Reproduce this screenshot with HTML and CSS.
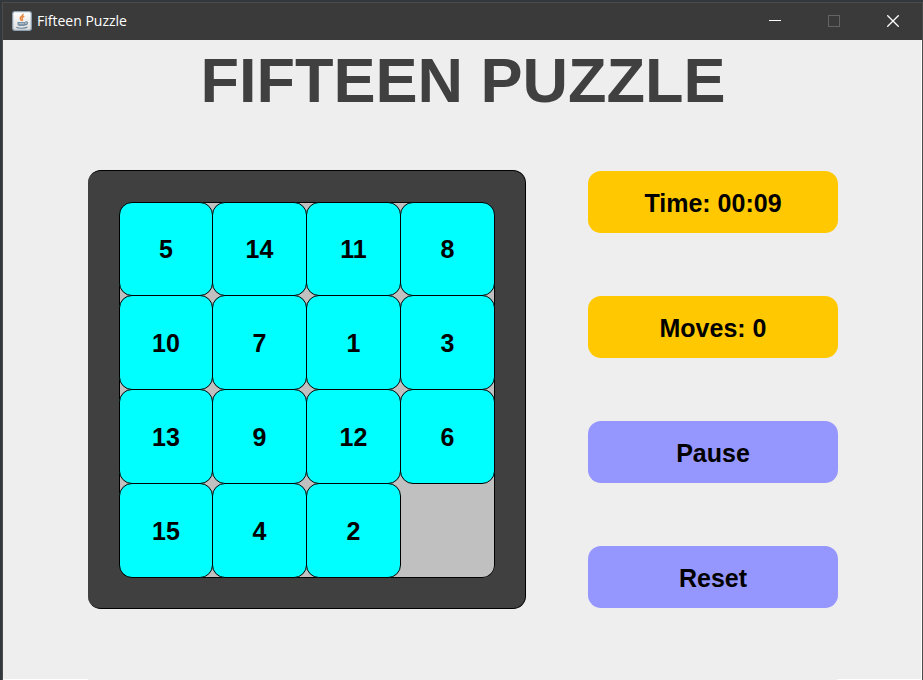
FILE: index.html
```html
<!DOCTYPE html>
<html lang="en">
<head>
<meta charset="utf-8">
<title>Fifteen Puzzle</title>
<link rel="stylesheet" href="styles.css">
</head>
<body>
<div class="window">
  <header class="titlebar">
    <svg class="app-icon" viewBox="0 0 20 20" aria-hidden="true">
      <defs><linearGradient id="plate" x1="0" y1="0" x2="0" y2="1"><stop offset="0" stop-color="#fff"/><stop offset="1" stop-color="#dcdcde"/></linearGradient></defs>
      <rect x=".7" y=".7" width="18.6" height="18.6" rx="2" fill="url(#plate)" stroke="#8fa3b3" stroke-width="1.2"/>
      <path d="M11 2.800c.8 2.200-3.400 2.800-2.800 4.800.3.900 1.100 1.300 1.200 2.300M12.300 5.400c-2 .8-2.800 1.500-2 2.600.5.800.2 1.300-.2 1.800" fill="none" stroke="#e88335" stroke-width="1.400"/>
      <path d="M5.500 11h8v2.200c0 1.200-1 1.800-2.200 1.800H8c-1.400 0-2.200-.8-2.500-1.800z" fill="#7890a3"/>
      <path d="M13.300 11c3-.9 2.800 2.300-.3 2.800M4.300 16.300c2.700 1.300 8.500 1.300 11.200-.2" fill="none" stroke="#68849a" stroke-width="1.200"/>
      <path d="M7 12.700h5" stroke="#c9d3da" stroke-width=".8"/>
    </svg>
    <span class="caption">Fifteen Puzzle</span>
    <div class="controls">
      <button class="control" type="button" aria-label="Minimize">
        <svg viewBox="0 0 12 12"><path d="M0 5.500h12" stroke="#fff"/></svg>
      </button>
      <button class="control" type="button" aria-label="Maximize" disabled>
        <svg viewBox="0 0 12 12"><rect x=".5" y=".5" width="11" height="11" fill="none" stroke="#646464"/></svg>
      </button>
      <button class="control" type="button" aria-label="Close">
        <svg viewBox="0 0 12 12"><path d="M.3.3l11.400 11.400M11.700.3L.3 11.700" stroke="#fff" stroke-width="1.300"/></svg>
      </button>
    </div>
  </header>
  <main class="content">
    <h1 class="title">FIFTEEN PUZZLE</h1>
    <div class="game">
      <div class="frame">
        <div class="board">
          <button class="tile" type="button">5</button>
          <button class="tile" type="button">14</button>
          <button class="tile" type="button">11</button>
          <button class="tile" type="button">8</button>
          <button class="tile" type="button">10</button>
          <button class="tile" type="button">7</button>
          <button class="tile" type="button">1</button>
          <button class="tile" type="button">3</button>
          <button class="tile" type="button">13</button>
          <button class="tile" type="button">9</button>
          <button class="tile" type="button">12</button>
          <button class="tile" type="button">6</button>
          <button class="tile" type="button">15</button>
          <button class="tile" type="button">4</button>
          <button class="tile" type="button">2</button>
        </div>
      </div>
      <div class="side">
        <div class="panel">Time: 00:09</div>
        <div class="panel">Moves: 0</div>
        <button class="panel action" type="button">Pause</button>
        <button class="panel action" type="button">Reset</button>
      </div>
    </div>
    <div class="edge"></div>
  </main>
</div>
</body>
</html>
```
FILE: styles.css
```css
* {
  box-sizing: border-box;
}

body {
  margin: 0;
  padding: 2px 0 0 2px;
  min-height: 100vh;
  display: flex;
  background: #33383c;
  font-family: "Liberation Sans", Arial, sans-serif;
}

button {
  font: inherit;
  color: inherit;
  border: 0;
  padding: 0;
}

.window {
  flex: 1;
  display: flex;
  flex-direction: column;
  border: 1px solid #4b4b4b;
  border-bottom: 0;
}

.titlebar {
  height: 37px;
  display: flex;
  align-items: center;
  padding: 0 0 2px 9px;
  background: #3a3a3a;
  color: #fff;
}

.app-icon {
  width: 20px;
  height: 20px;
}

.caption {
  margin-left: 5px;
  font-family: "Open Sans", "Noto Sans", sans-serif;
  font-size: 14px;
  line-height: 20px;
}

.controls {
  display: flex;
  align-self: stretch;
  margin-left: auto;
}

.control {
  width: 59px;
  display: flex;
  align-items: center;
  justify-content: center;
  background: none;
}

.control svg {
  width: 12px;
  height: 12px;
}

.content {
  flex: 1;
  display: flex;
  flex-direction: column;
  align-items: center;
  padding-left: 2px;
  background: #eee;
  border-right: 1px solid #fff;
}

.title {
  margin: 0;
  height: 130px;
  padding-top: 4px;
  color: #404040;
  font-size: 63px;
  line-height: 72px;
}

.game {
  display: flex;
  gap: 62px;
  font-size: 25px;
  font-weight: bold;
  color: #000;
}

.frame {
  padding: 31px 30px 30px 31px;
  background: #404040;
  border: 1px solid #000;
  border-left: 0;
  border-radius: 13px;
}

.board {
  display: grid;
  grid-template-columns: 93px repeat(3, 94px);
  grid-template-rows: 93px repeat(3, 94px);
  padding: 0 1px 1px 0;
  background: #c0c0c0;
  border-radius: 13px;
  box-shadow: inset 0 0 0 1px #000;
}

.tile {
  margin: 0 -1px -1px 0;
  padding-top: 1px;
  background: #0ff;
  border: 1px solid #000;
  border-radius: 13px;
}

.side {
  display: flex;
  flex-direction: column;
  justify-content: space-between;
  padding: 1px 0;
}

.panel {
  width: 250px;
  height: 62px;
  display: flex;
  align-items: center;
  justify-content: center;
  padding-top: 3px;
  background: #ffc800;
  border-radius: 13px;
}

.action {
  background: #9696ff;
}

.edge {
  align-self: stretch;
  height: 1px;
  margin: auto 0 0 -2px;
  border: solid #fff;
  border-width: 0 84px 0 85px;
}
```
